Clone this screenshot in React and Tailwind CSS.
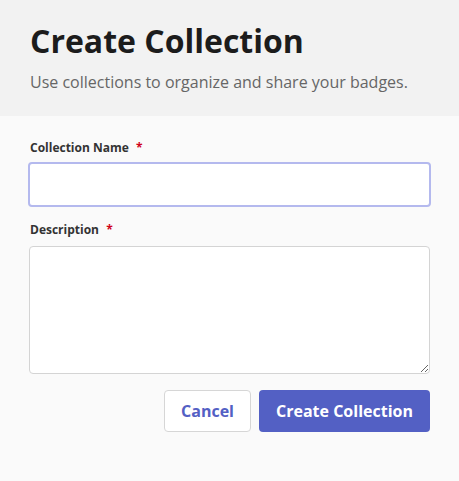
export default function App() {
  return (
    <div className="min-h-[481px] bg-[#fafafa] font-['Open_Sans',sans-serif]">
      <header className="bg-[#f2f2f2] px-[30px] pt-[20px] pb-[22px]">
        <h1 className="text-[32px] leading-[42px] font-bold text-[#1c1c1c]">Create Collection</h1>
        <p className="mt-[8px] text-[16px] leading-[24px] text-[#666]">
          Use collections to organize and share your badges.
        </p>
      </header>
      <form className="px-[28px] pt-[23px] flex flex-col">
        <label className="pl-[2px] text-[12px] leading-[18px] font-bold text-[#333]">
          Collection Name <span className="ml-[4px] text-[#d0021b]">*</span>
        </label>
        <input
          type="text"
          className="mt-[5px] h-[45px] w-full rounded-[4px] border-2 border-[#b4b9ee] bg-white px-3 outline-none"
        />
        <label className="mt-[14px] pl-[2px] text-[12px] leading-[18px] font-bold text-[#333]">
          Description <span className="ml-[4px] text-[#d0021b]">*</span>
        </label>
        <textarea className="mt-[7px] mx-[1px] h-[128px] rounded-[4px] border border-[#d4d4d4] bg-white px-3 py-2 outline-none" />
        <div className="mt-[16px] flex justify-end gap-[8px] pr-[1px]">
          <button
            type="button"
            className="h-[42px] w-[87px] rounded-[4px] border border-[#d6d6d6] bg-white text-[16px] font-bold text-[#5360c4]"
          >
            Cancel
          </button>
          <button
            type="button"
            className="h-[42px] w-[171px] rounded-[4px] bg-[#5360c4] text-[16px] font-bold text-white"
          >
            Create Collection
          </button>
        </div>
      </form>
    </div>
  );
}
